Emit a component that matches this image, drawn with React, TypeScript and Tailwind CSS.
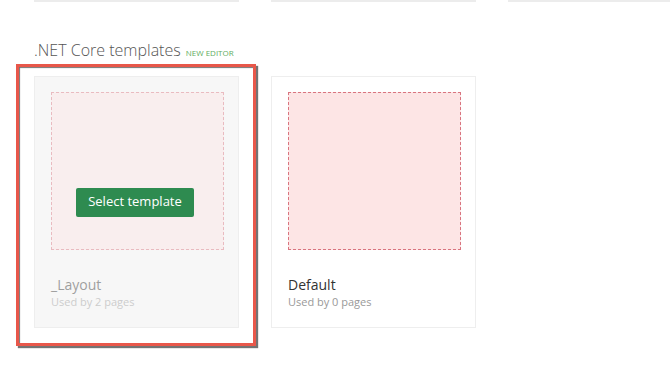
const font = { fontFamily: '"Open Sans", "Liberation Sans", sans-serif' }

function TemplateCard({
  name,
  usage,
  faded,
}: {
  name: string
  usage: string
  faded?: boolean
}) {
  return (
    <div
      className={`relative shrink-0 w-[205px] h-[252px] border ${
        faded ? 'bg-[#f7f7f7] border-[#eeeeee]' : 'bg-white border-[#eeeeee]'
      }`}
    >
      <div className={`pt-[15px] px-[16px] ${faded ? 'opacity-45' : ''}`}>
        <div className="w-[173px] h-[158px] bg-[#fde5e5] border border-dashed border-[#d9747f]" />
        <div className="mt-[25px] text-[14px] leading-[19px] text-[#333]">{name}</div>
        <div className="text-[11px] leading-[15px] text-[#999]">{usage}</div>
      </div>
      {faded && (
        <div className="absolute inset-0 flex items-center justify-center pr-[3px]">
          <button className="w-[118px] h-[29px] rounded-[2px] bg-[#2e8b50] text-white text-[13px]">
            Select template
          </button>
        </div>
      )}
    </div>
  )
}

export default function App() {
  return (
    <div className="w-[670px] h-[387px] bg-white overflow-hidden" style={font}>
      <div className="flex gap-[32px] pl-[34px]">
        <div className="shrink-0 w-[205px] h-[2px] bg-[#ececec]" />
        <div className="shrink-0 w-[205px] h-[2px] bg-[#ececec]" />
        <div className="shrink-0 w-[205px] h-[2px] bg-[#ececec]" />
      </div>

      <div className="pl-[34px] pt-[38px] flex items-baseline gap-[5px]">
        <h2 className="text-[16px] leading-[20px] font-light text-[#555]">
          .NET Core templates
        </h2>
        <span className="text-[8px] uppercase text-[#62ad62]">New editor</span>
      </div>

      <div className="relative flex gap-[32px] pl-[34px] pt-[16px]">
        <div className="absolute left-[16px] top-[4px] w-[240px] h-[282px] border-[3px] border-[#e8574a] shadow-[2px_2px_1px_rgba(0,0,0,0.55),inset_1px_1px_1px_rgba(0,0,0,0.55)] z-10 pointer-events-none" />
        <TemplateCard name="_Layout" usage="Used by 2 pages" faded />
        <TemplateCard name="Default" usage="Used by 0 pages" />
      </div>
    </div>
  )
}
